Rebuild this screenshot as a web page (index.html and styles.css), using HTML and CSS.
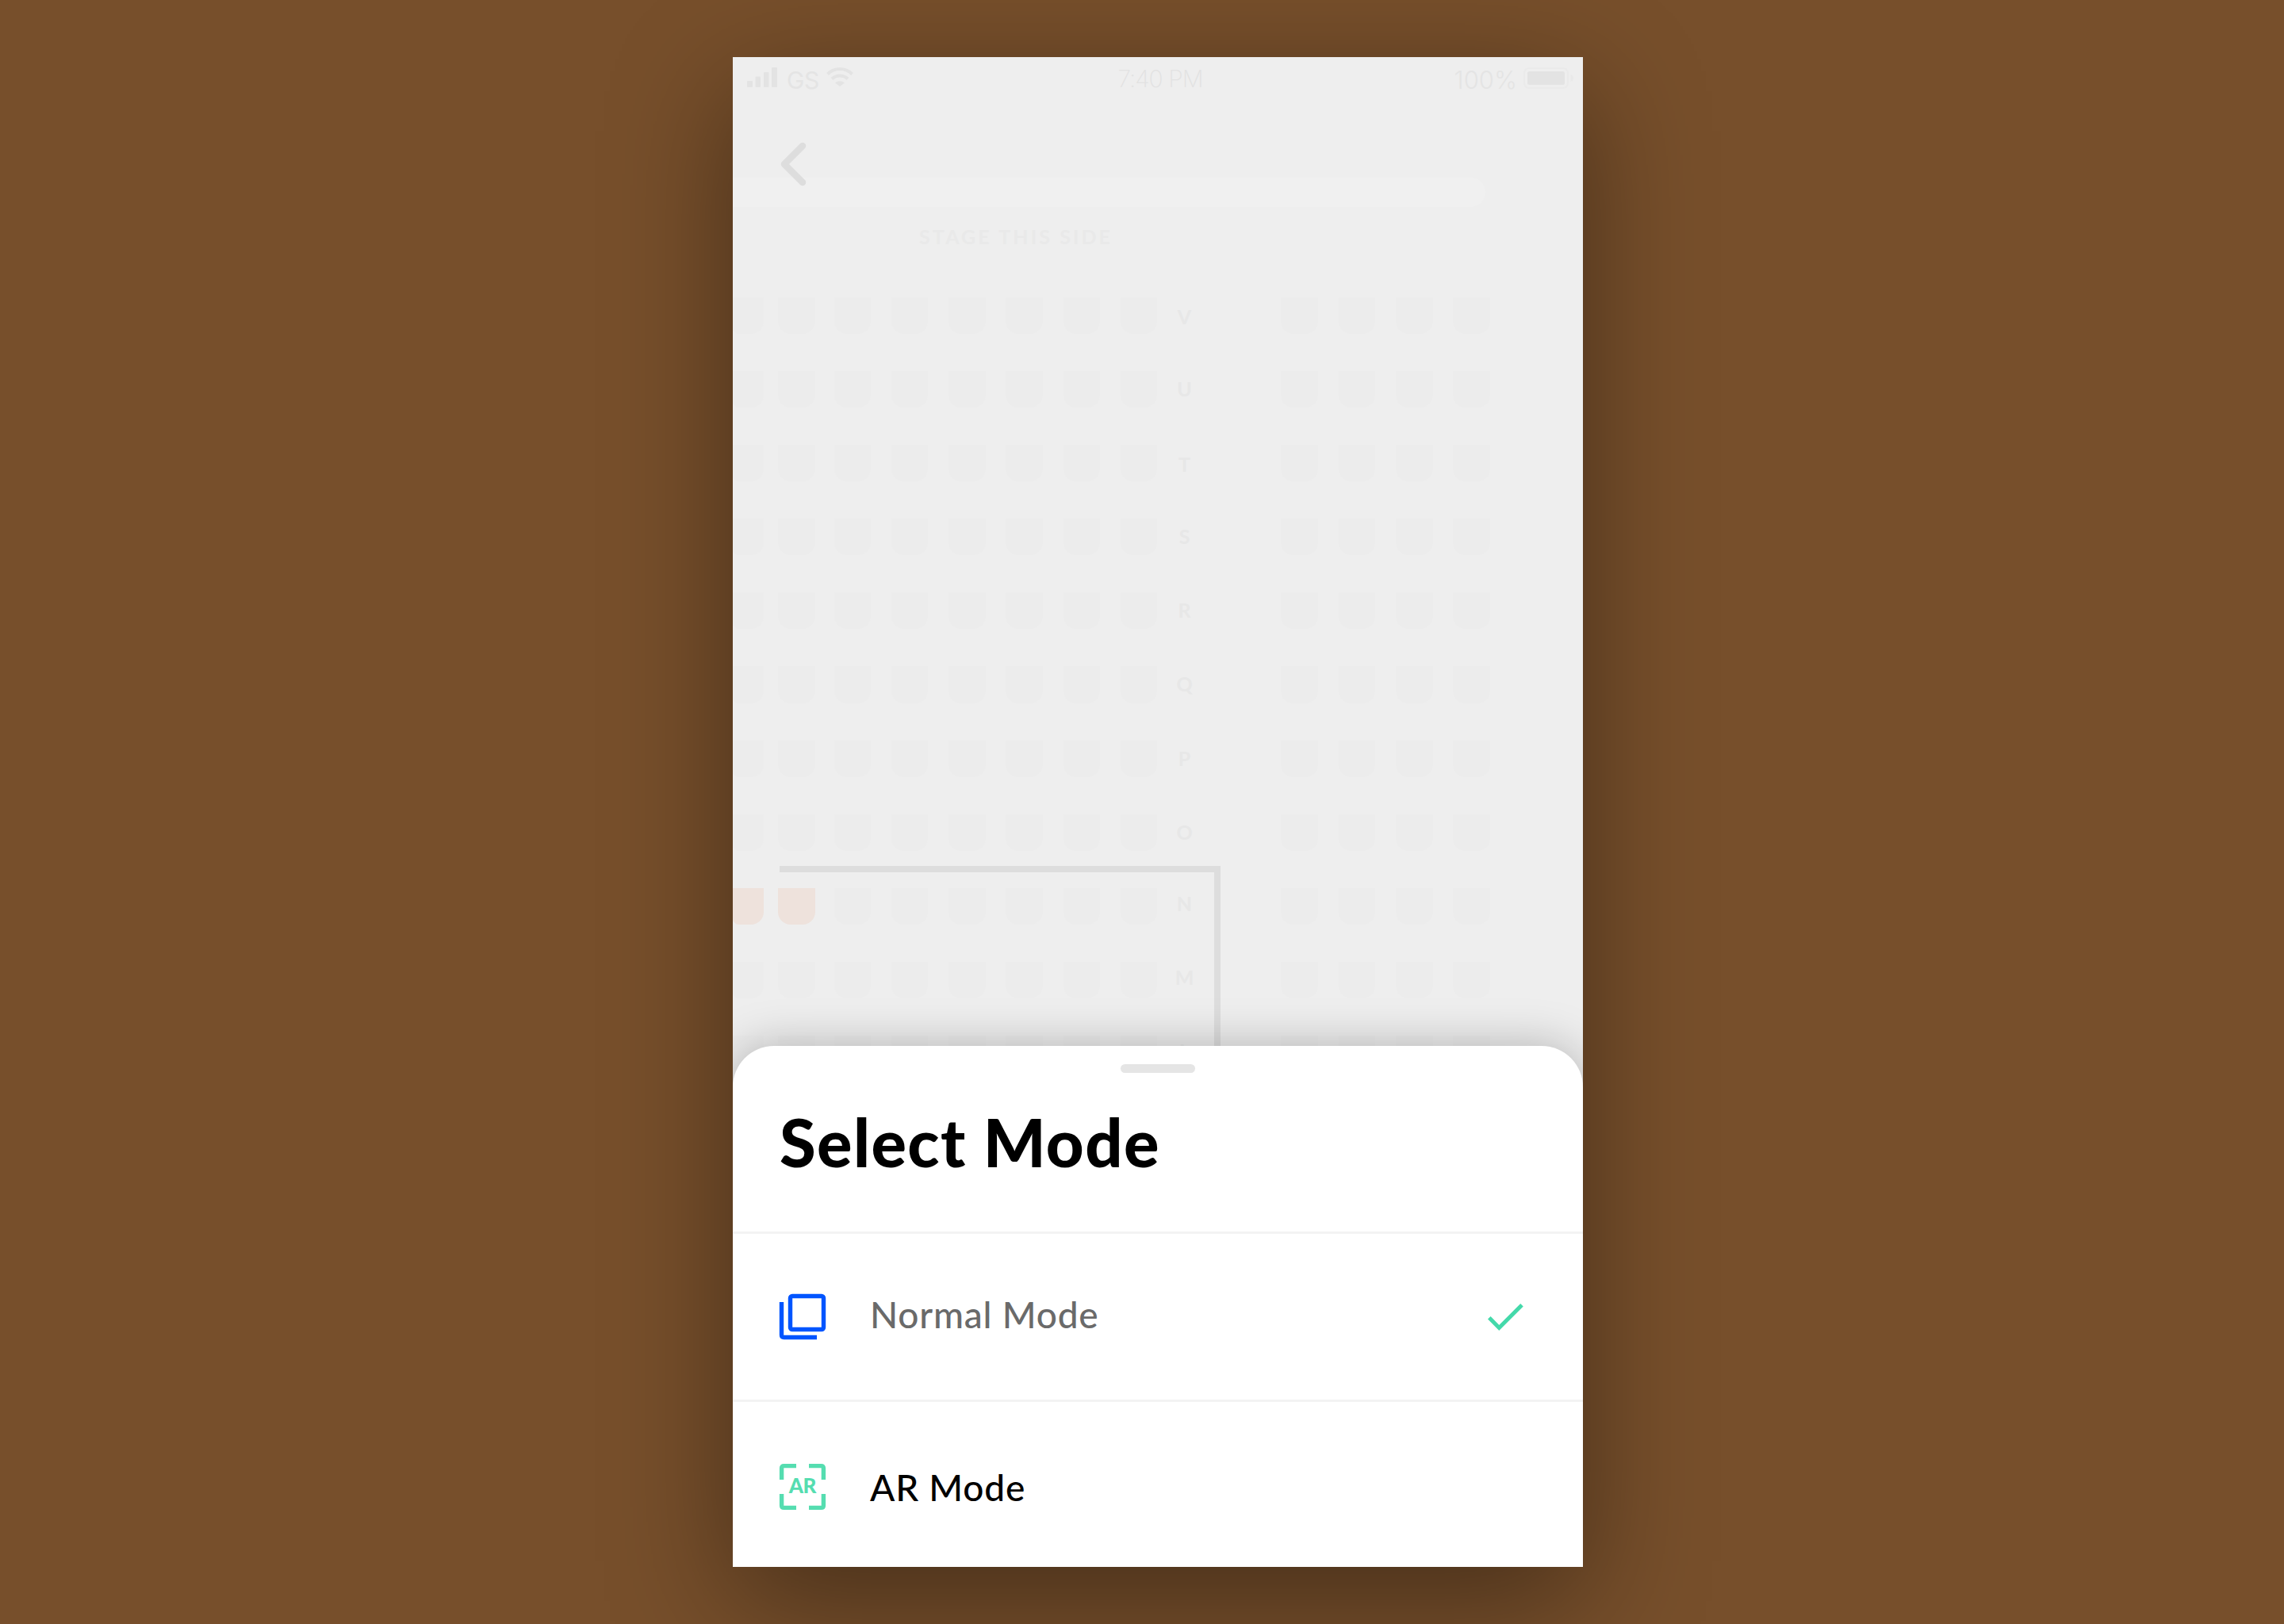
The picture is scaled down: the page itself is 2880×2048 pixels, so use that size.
FILE: index.html
```html
<!DOCTYPE html>
<html lang="en">
<head>
    <meta charset="UTF-8">
    <meta name="viewport" content="width=device-width, initial-scale=1.0">
    <title>Select Mode</title>
    <link rel="stylesheet" href="styles.css">
</head>
<body>
    <main class="phone">
        <header class="status-bar">
            <div class="status-left">
                <svg class="signal" viewBox="0 0 38 25">
                    <rect x="0" y="17" width="7" height="8" rx="1"/>
                    <rect x="10.5" y="11.5" width="6.5" height="13.5" rx="1"/>
                    <rect x="21" y="6" width="6.5" height="19" rx="1"/>
                    <rect x="31" y="0" width="7" height="25" rx="1"/>
                </svg>
                <span class="carrier">GS</span>
                <svg class="wifi" viewBox="0 0 34 24">
                    <path class="arc" d="M1.5 8.5 A22 22 0 0 1 32.5 8.5"/>
                    <path class="arc" d="M7 14.5 A14.5 14.5 0 0 1 27 14.5"/>
                    <path d="M11 19.5 A9 9 0 0 1 23 19.5 L17 24 Z"/>
                </svg>
            </div>
            <span class="time">7:40 PM</span>
            <div class="status-right">
                <span class="percent">100%</span>
                <svg class="battery" viewBox="0 0 63 27">
                    <rect class="case" x="1" y="1" width="55" height="25" rx="6"/>
                    <rect x="5" y="5" width="47" height="17" rx="2.5"/>
                    <path class="tip" d="M59.5 9 Q63 10 63 13.5 Q63 17 59.5 18 Z"/>
                </svg>
            </div>
        </header>

        <a href="#" class="back">
            <svg viewBox="0 0 33 56">
                <path d="M28 5 L5 28 L28 51"/>
            </svg>
        </a>

        <div class="stage"></div>
        <p class="stage-label">STAGE THIS SIDE</p>

        <div id="seats" class="seats"></div>
        <div class="block-outline"></div>

        <section class="sheet">
            <div class="handle"></div>
            <h1>Select Mode</h1>
            <ul class="modes">
                <li class="mode selected">
                    <svg class="mode-icon normal" viewBox="0 0 58 58">
                        <rect x="13.5" y="2.5" width="42" height="42" rx="2.5"/>
                        <path d="M2.5 10 V51.5 Q2.5 54.5 5.5 54.5 H47"/>
                    </svg>
                    <span class="mode-name">Normal Mode</span>
                    <svg class="check" viewBox="0 0 45 34">
                        <path d="M1.8 17.8 L14.3 30.4 L43 1.8"/>
                    </svg>
                </li>
                <li class="mode">
                    <svg class="mode-icon ar" viewBox="0 0 58 58">
                        <path d="M2.6 20 V5.5 Q2.6 2.6 5.5 2.6 H21 M37 2.6 H52.5 Q55.4 2.6 55.4 5.5 V20 M55.4 38 V52.5 Q55.4 55.4 52.5 55.4 H37 M21 55.4 H5.5 Q2.6 55.4 2.6 52.5 V38"/>
                        <text x="28.7" y="37" text-anchor="middle">AR</text>
                    </svg>
                    <span class="mode-name">AR Mode</span>
                </li>
            </ul>
        </section>
    </main>

    <script>
        // row letter and how far its middle sits below the top of the seats
        const rows = [
            ["V", 24], ["U", 22], ["T", 24], ["S", 22], ["R", 22], ["Q", 22],
            ["P", 22], ["O", 22], ["N", 19], ["M", 19], ["L", 19]
        ];
        const seats = document.getElementById("seats");

        rows.forEach(([letter, middle]) => {
            const row = document.createElement("div");
            row.classList.add("row");
            for (let i = 0; i < 12; i++) {
                const seat = document.createElement("span");
                seat.classList.add("seat");
                if (letter === "N" && i < 2) {
                    seat.classList.add("taken");
                }
                row.appendChild(seat);
                if (i === 7) {
                    const label = document.createElement("span");
                    label.classList.add("letter");
                    label.textContent = letter;
                    label.style.lineHeight = middle * 2 + "px";
                    row.appendChild(label);
                }
            }
            seats.appendChild(row);
        });
    </script>
</body>
</html>
```
FILE: styles.css
```css
* {
    box-sizing: border-box;
}
body {
    margin: 0;
    padding: 72px 0 0 924px;
    height: 2048px;
    overflow: hidden;
    background: #774f2b;
    font-family: Lato, "Open Sans", sans-serif;
}
.phone {
    position: relative;
    display: flex;
    flex-direction: column;
    width: 1072px;
    height: 1904px;
    background: #eeeeee;
    box-shadow: 0 43px 143px rgba(0, 0, 0, 0.4);
}
svg {
    display: block;
    overflow: visible;
}

/* status bar */
.status-bar {
    display: grid;
    grid-template-columns: 1fr auto 1fr;
    height: 107px;
    padding: 13px 12px 0 18px;
    font-family: Inter, sans-serif;
    font-size: 30px;
    line-height: 34px;
    color: #e4e4e4;
    fill: #e3e3e3;
}
.status-left,
.status-right {
    display: flex;
    align-items: flex-start;
}
.status-right {
    justify-content: flex-end;
}
.signal {
    width: 38px;
    height: 25px;
}
.carrier {
    margin: -1px 9px 0 12px;
    letter-spacing: -0.5px;
}
.wifi {
    width: 34px;
    height: 24px;
}
.arc {
    fill: none;
    stroke: #e3e3e3;
    stroke-width: 4;
}
.time {
    margin-top: -3px;
    font-weight: 200;
    letter-spacing: -1px;
    color: #e2e2e2;
}
.percent {
    margin: -1px 8px 0 0;
    font-size: 31px;
    font-weight: 300;
}
.battery {
    width: 63px;
    height: 27px;
}
.case {
    fill: none;
    stroke: #eaeaea;
    stroke-width: 2;
}
.tip {
    fill: #e9e9e9;
}

.back {
    position: relative;
    z-index: 1;
    width: 33px;
    height: 56px;
    margin-left: 60px;
}
.back path {
    fill: none;
    stroke: #dddddd;
    stroke-width: 8.5;
    stroke-linecap: round;
    stroke-linejoin: round;
}

/* stage and seats */
.stage {
    width: 949px;
    height: 37px;
    margin-top: -11px;
    background: #f0f0f0;
    border-radius: 0 19px 19px 0;
}
.stage-label {
    margin: 22px 0 0 235px;
    font-size: 25px;
    font-weight: 700;
    line-height: 30px;
    letter-spacing: 3.1px;
    white-space: nowrap;
    color: #e9e9e9;
}
.seats {
    display: flex;
    flex-direction: column;
    gap: 47px;
    margin-top: 62px;
}
.row {
    display: flex;
    height: 46.1px;
}
.seat {
    flex: none;
    width: 46.5px;
    margin-right: 25.8px;
    background: #ececec;
    border-radius: 0 0 16px 16px;
}
/* first seat runs off the left edge of the screen */
.seat:nth-child(1) {
    width: 39px;
    margin-right: 18px;
    border-radius: 0 0 16px 8px;
}
.seat:nth-child(2) {
    margin-right: 24px;
}
.seat:nth-child(8) {
    margin-right: 0;
}
.taken {
    background: #eee2dc;
}
.letter {
    flex: none;
    width: 68px;
    margin-right: 88px;
    text-align: center;
    font-size: 25px;
    font-weight: 700;
    color: #e7e7e7;
}
.block-outline {
    position: absolute;
    left: 59px;
    top: 1020px;
    width: 556px;
    height: 260px;
    border: solid #dddddd;
    border-width: 8px 8px 0 0;
}

/* bottom sheet */
.sheet {
    position: absolute;
    left: 0;
    right: 0;
    bottom: 0;
    height: 657px;
    background: white;
    border-radius: 52px 52px 0 0;
    box-shadow: 0 0 57px rgba(0, 0, 0, 0.25);
    clip-path: inset(-100px 0 0 0);
}
.handle {
    width: 94px;
    height: 11px;
    margin: 23px auto 0;
    background: #e5e5e5;
    border-radius: 6px;
}
h1 {
    height: 200px;
    margin: 0;
    padding: 37px 0 0 59px;
    font-size: 83px;
    font-weight: 900;
    line-height: 100px;
    letter-spacing: 1.4px;
    color: black;
}
.modes {
    margin: 0;
    padding: 0;
    list-style: none;
}
.mode {
    display: flex;
    align-items: center;
    height: 217px;
    padding: 0 75px 0 59px;
    border-top: 3px solid #f3f3f3;
    font-size: 46px;
    color: black;
}
.selected {
    height: 212px;
}
.mode-icon {
    width: 58px;
    height: 58px;
    fill: none;
    stroke-width: 5.4;
}
.normal {
    stroke: #0055ff;
}
.ar {
    stroke: #55ddb0;
}
.ar text {
    fill: #55ddb0;
    stroke: none;
    font-size: 26px;
    font-weight: 900;
    letter-spacing: -0.5px;
}
.mode-name {
    margin-left: 56px;
    font-weight: 500;
    letter-spacing: 0.8px;
}
.selected .mode-name {
    margin-bottom: 7px;
    color: #6a6a6a;
}
.check {
    width: 45px;
    height: 34px;
    margin-left: auto;
    fill: none;
    stroke: #44d9aa;
    stroke-width: 5;
}
```
